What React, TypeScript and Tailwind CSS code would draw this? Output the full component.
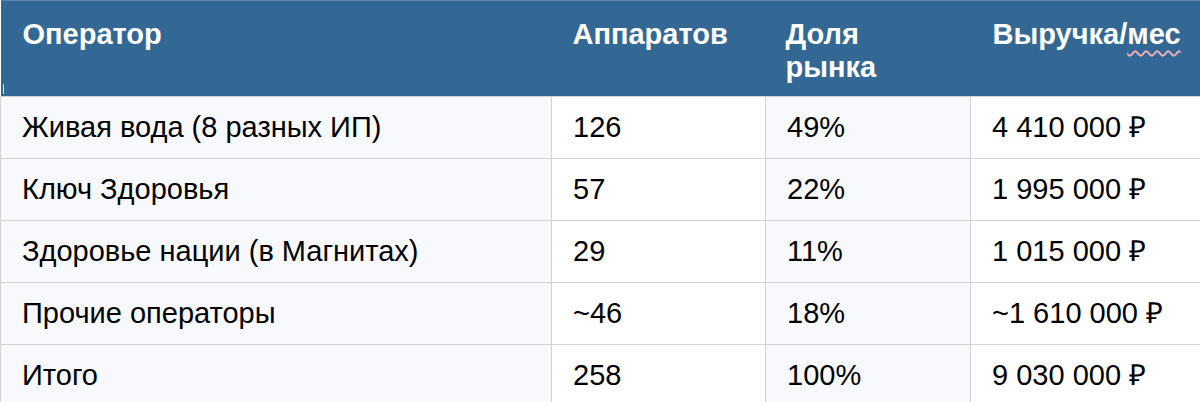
import React from "react";

const rows = [
  ["Живая вода (8 разных ИП)", "126", "49%", "4 410 000 ₽"],
  ["Ключ Здоровья", "57", "22%", "1 995 000 ₽"],
  ["Здоровье нации (в Магнитах)", "29", "11%", "1 015 000 ₽"],
  ["Прочие операторы", "~46", "18%", "~1 610 000 ₽"],
  ["Итого", "258", "100%", "9 030 000 ₽"],
];

const tinted = [true, false, true, false];

export default function App() {
  return (
    <div className="w-[1200px] h-[402px] overflow-hidden bg-white font-['Liberation_Sans',Arial,sans-serif] text-[29px] text-black">
      <table className="w-[1200px] table-fixed border-collapse">
        <colgroup>
          <col className="w-[551px]" />
          <col className="w-[214px]" />
          <col className="w-[205px]" />
          <col className="w-[230px]" />
        </colgroup>
        <thead>
          <tr className="h-[96px] bg-[#346894] border-t border-[#5b88b0]">
            <th className="relative align-top text-left font-bold text-white leading-[33px] pt-[17px] pl-[22px]">
              Оператор
              <span className="absolute left-[2px] bottom-[2px] w-px h-[10px] bg-[#dfe7ef]" />
            </th>
            <th className="align-top text-left font-bold text-white leading-[33px] pt-[17px] pl-[21px]">
              Аппаратов
            </th>
            <th className="align-top text-left font-bold text-white leading-[33px] pt-[17px] pl-[20px]">
              Доля
              <br />
              рынка
            </th>
            <th className="align-top text-left font-bold text-white leading-[33px] pt-[17px] pl-[22px]">
              Выручка/
              <span className="underline decoration-wavy decoration-[#f0b0bc] decoration-[1.5px] underline-offset-[6px]">
                мес
              </span>
            </th>
          </tr>
        </thead>
        <tbody>
          {rows.map((r, i) => (
            <tr key={i} className="h-[62px]">
              {r.map((c, j) => (
                <td
                  key={j}
                  className={`border border-[#d2d2d2] pl-[21px] align-middle leading-[33px] whitespace-nowrap ${
                    tinted[j] ? "bg-[#f7f9fd]" : "bg-white"
                  }`}
                >
                  {c}
                </td>
              ))}
            </tr>
          ))}
        </tbody>
      </table>
    </div>
  );
}
